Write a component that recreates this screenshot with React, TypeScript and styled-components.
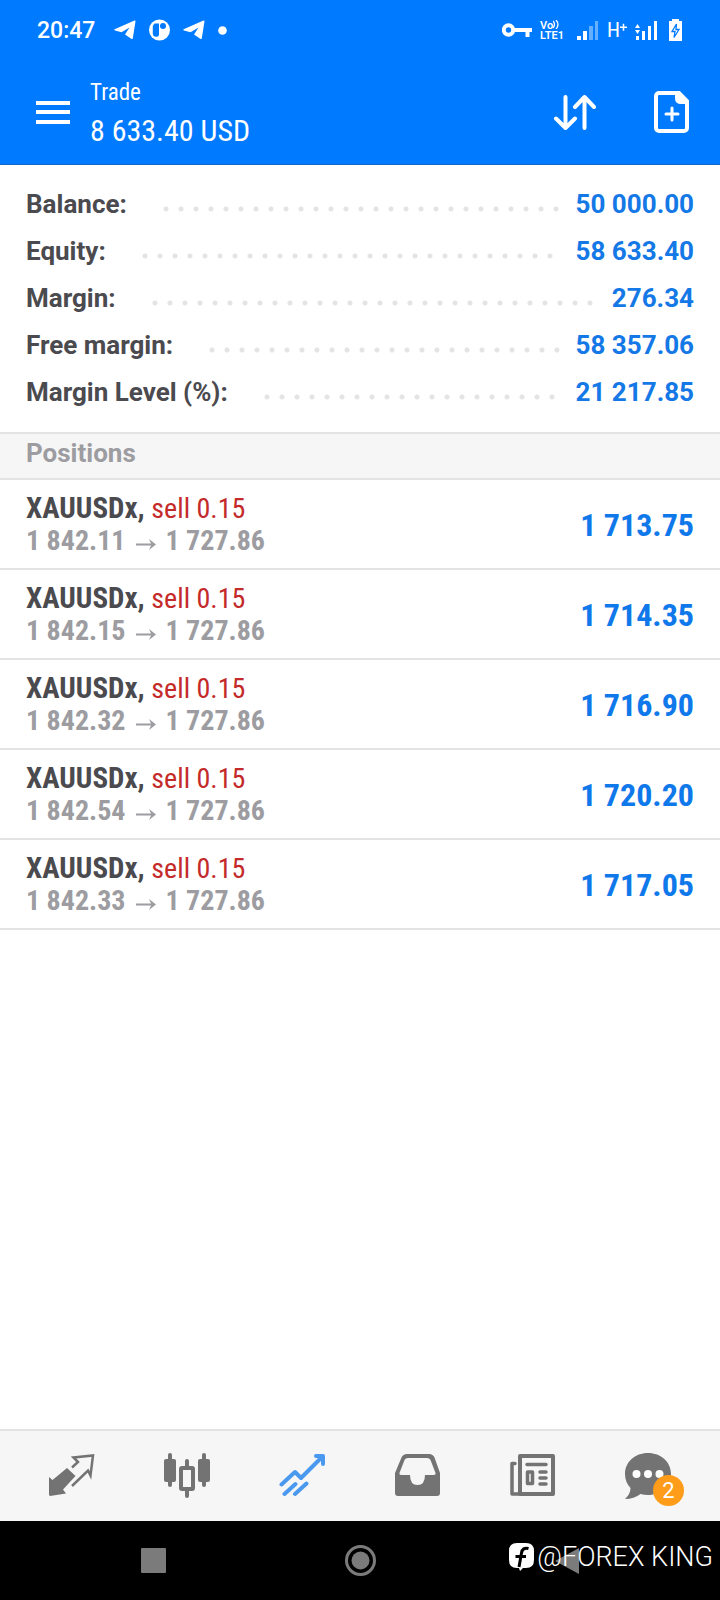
import React from "react";
import styled, { createGlobalStyle } from "styled-components";

const condensed = `"Roboto Condensed", "Liberation Sans Narrow", Roboto, sans-serif`;

const GlobalStyle = createGlobalStyle`
  * { box-sizing: border-box; }
  html, body, #root { height: 100%; }
  body {
    margin: 0;
    background: #fff;
    font-family: Roboto, sans-serif;
  }
`;

const Screen = styled.div`
  display: flex;
  flex-direction: column;
  min-height: 100%;
  background: #fff;
`;

const StatusBar = styled.div`
  display: flex;
  align-items: center;
  justify-content: space-between;
  height: 60px;
  padding: 0 37px;
  background: #007aff;
  color: #fff;
`;

const StatusGroup = styled.div<{ $gap: number }>`
  display: flex;
  align-items: center;
  gap: ${(p) => p.$gap}px;
`;

const Clock = styled.span`
  padding-top: 2px;
  font-size: 23px;
  line-height: 28px;
  font-weight: 500;
  margin-right: 6px;
`;

const VoLte = styled.span`
  display: flex;
  flex-direction: column;
  width: 29px;
  font-size: 11px;
  line-height: 10px;
  font-weight: 600;
  white-space: nowrap;
`;

const Network = styled.span`
  display: flex;
  align-items: center;
  width: 20px;
  font-family: ${condensed};
  font-size: 21px;
  line-height: 24px;
`;

const Header = styled.header`
  display: flex;
  align-items: center;
  height: 105px;
  padding: 0 30px 0 35px;
  background: #007aff;
  border-bottom: 1px solid #1266c4;
  color: #fff;
`;

const IconButton = styled.button`
  display: flex;
  padding: 0;
  border: 0;
  background: none;
  color: inherit;
  cursor: pointer;
`;

const Titles = styled.div`
  flex: 1;
  margin-left: 20px;
  padding-top: 2px;
  font-family: ${condensed};
`;

const Title = styled.h1`
  margin: 0;
  font-size: 23px;
  line-height: 36px;
  font-weight: 400;
`;

const Profit = styled.div`
  font-size: 30px;
  line-height: 40px;
`;

const Actions = styled.div`
  display: flex;
  align-items: center;
  gap: 58px;
`;

const Summary = styled.dl`
  margin: 0;
  padding: 15px 26px 17px;
`;

const SummaryRow = styled.div`
  display: flex;
  align-items: center;
  height: 47px;
  font-size: 26px;
  line-height: 30px;
  font-weight: 700;
`;

const Label = styled.dt`
  color: #4a4a4f;
`;

const Leader = styled.span`
  flex: 1;
  height: 6px;
  margin: 10px 14px 0 36px;
  background: radial-gradient(circle at 3px 3px, #e4e4e6 2px, transparent 3px) 0 0 / 15px 6px repeat-x;
`;

const Amount = styled.dd`
  margin: 0;
  color: #1478e6;
`;

const SectionTitle = styled.h2`
  height: 48px;
  margin: 0;
  padding: 4px 26px;
  border-top: 2px solid #e3e3e3;
  border-bottom: 2px solid #e3e3e3;
  background: #f6f6f6;
  color: #9c9ca1;
  font-size: 26px;
  line-height: 30px;
  font-weight: 700;
`;

const Positions = styled.ul`
  flex: 1;
  margin: 0;
  padding: 0;
  list-style: none;
`;

const Position = styled.li`
  display: flex;
  align-items: center;
  justify-content: space-between;
  height: 90px;
  padding: 1px 26px 0;
  border-bottom: 2px solid #e3e3e3;
  font-family: ${condensed};
  line-height: 32px;
  font-weight: 700;
`;

const Symbol = styled.div`
  color: #4a4a4f;
  font-size: 29px;
`;

const Side = styled.span`
  color: #c42a2a;
  font-size: 28px;
  font-weight: 400;
`;

const Prices = styled.div`
  color: #9c9ca1;
  font-size: 28px;
`;

const Arrow = styled.svg`
  margin: 0 10px;
  vertical-align: baseline;
`;

const Result = styled.div`
  color: #0f78ea;
  font-size: 32px;
  line-height: 40px;
`;

const TabBar = styled.nav`
  display: flex;
  justify-content: space-between;
  height: 92px;
  padding: 0 42px;
  border-top: 2px solid #e3e3e3;
  background: #f6f6f6;
`;

const Tab = styled.button<{ $active?: boolean }>`
  position: relative;
  display: flex;
  align-items: center;
  justify-content: center;
  width: 60px;
  padding: 0;
  border: 0;
  background: none;
  color: ${(p) => (p.$active ? "#4a99ee" : "#737373")};
  font-family: inherit;
  cursor: pointer;
`;

const Badge = styled.span`
  position: absolute;
  right: -6px;
  bottom: 15px;
  width: 31px;
  height: 31px;
  border-radius: 50%;
  background: #ff9c1a;
  color: #fff;
  font-size: 22px;
  line-height: 32px;
  text-align: center;
`;

const SystemNav = styled.div`
  position: relative;
  display: flex;
  align-items: center;
  justify-content: space-around;
  height: 79px;
  padding: 0 52px;
  background: #000;
  color: #7b7b7b;
`;

const Watermark = styled.div`
  position: absolute;
  right: 7px;
  top: 19px;
  display: flex;
  align-items: center;
  gap: 3px;
  color: #fff;
  font-size: 27px;
  line-height: 34px;
  font-weight: 300;
`;

const Plane = () => (
  <svg width="22" height="20" viewBox="0 0 22 20" fill="currentColor">
    <path d="M0.6 9.200 20.500.5c.6-.3 1.100 0 1 .8L18.800 18.200c-.2.900-.9 1.100-1.600.6L11 14.400 15.500 7.500 7.500 12.300 1 10.500C.2 10.200.1 9.500.6 9.200Z" />
  </svg>
);

const summary = [
  ["Balance:", "50 000.00"],
  ["Equity:", "58 633.40"],
  ["Margin:", "276.34"],
  ["Free margin:", "58 357.06"],
  ["Margin Level (%):", "21 217.85"],
];

const positions = [
  ["1 842.11", "1 713.75"],
  ["1 842.15", "1 714.35"],
  ["1 842.32", "1 716.90"],
  ["1 842.54", "1 720.20"],
  ["1 842.33", "1 717.05"],
];

export default function App() {
  return (
    <Screen>
      <GlobalStyle />
      <StatusBar>
        <StatusGroup $gap={13}>
          <Clock>20:47</Clock>
          <Plane />
          <svg width="21" height="22" viewBox="0 0 21 22">
            <circle cx="10.500" cy="11" r="10.500" fill="#fff" />
            <path d="M5.500 4.500h4.500v11a2.300 2.300 0 0 1-2.300 2.300H6.500A3 3 0 0 1 3.800 15V7Z" fill="#007aff" />
            <circle cx="14" cy="7" r="3" fill="#007aff" />
          </svg>
          <Plane />
          <svg width="9" height="9" viewBox="0 0 9 9">
            <circle cx="4.500" cy="4.500" r="4.300" fill="#fff" />
          </svg>
        </StatusGroup>
        <StatusGroup $gap={8}>
          <svg width="30" height="16" viewBox="0 0 30 16" fill="none" stroke="#fff" strokeWidth="4">
            <circle cx="6.500" cy="8" r="4.700" />
            <path d="M12 8h18M25.500 9v6" />
          </svg>
          <VoLte>
            <span>
              Vo
              <svg width="6" height="9" viewBox="0 0 6 9" fill="none" stroke="#fff" strokeWidth="1.300">
                <path d="M0 1q3 3.500 0 7M3 0q4 4.500 0 9" />
              </svg>
            </span>
            <span>LTE1</span>
          </VoLte>
          <svg width="22" height="20" viewBox="0 0 22 20" fill="#fff">
            <path d="M0 16h4v4H0zM6 11h4v9H6z" />
            <path d="M12 6h4v14h-4zM18 1h3v19h-3z" opacity=".4" />
          </svg>
          <Network>
            H
            <svg width="9" height="18" viewBox="0 0 9 18" fill="none" stroke="#fff" strokeWidth="2">
              <path d="M0 5.500h9M4.500 1v9" />
            </svg>
          </Network>
          <svg width="22" height="20" viewBox="0 0 22 20" fill="#fff">
            <path d="M1 16h3v4H1zM7 11h3v9H7zM13 6h3v14h-3zM19 1h3v19h-3zM0 8l2.500-4L5 8zM0 10l2.500 4L5 10z" />
          </svg>
          <svg width="18" height="24" viewBox="0 0 18 24">
            <path d="M4 3h3V1h7v2h3v20H4z" fill="#fff" />
            <path d="M11.500 6 7 13.500h3L9 19.500 14 11.500h-3Z" fill="#fff" stroke="#007aff" strokeWidth="1.300" />
          </svg>
        </StatusGroup>
      </StatusBar>

      <Header>
        <IconButton aria-label="Menu">
          <svg width="35" height="24" viewBox="0 0 35 24" fill="currentColor">
            <path d="M1 1h34v4H1zM1 10h34v4H1zM1 20h34v4H1z" />
          </svg>
        </IconButton>
        <Titles>
          <Title>Trade</Title>
          <Profit>8 633.40 USD</Profit>
        </Titles>
        <Actions>
          <IconButton aria-label="Sort">
            <svg width="43" height="36" viewBox="0 0 43 36" fill="none" stroke="currentColor" strokeWidth="4" strokeLinecap="round" strokeLinejoin="round">
              <path d="M12.500 3v31M3 24.500 12.500 34l9.500-9.500M31.500 34V3M22 13 31.500 3l9.500 10" />
            </svg>
          </IconButton>
          <IconButton aria-label="New order">
            <svg width="36" height="42" viewBox="0 0 36 42" fill="none" stroke="currentColor" strokeWidth="4">
              <path d="M5 2H25L33 10V37a3 3 0 0 1-3 3H5a3 3 0 0 1-3-3V5a3 3 0 0 1 3-3Z" />
              <path d="M21 3v4q0 6 6 6h6V10L25 3Z" fill="currentColor" stroke="none" />
              <path d="M18 17v12M12 23h12" strokeWidth="3" strokeLinecap="round" />
            </svg>
          </IconButton>
        </Actions>
      </Header>

      <Summary>
        {summary.map(([label, value]) => (
          <SummaryRow key={label}>
            <Label>{label}</Label>
            <Leader />
            <Amount>{value}</Amount>
          </SummaryRow>
        ))}
      </Summary>

      <SectionTitle>Positions</SectionTitle>
      <Positions>
        {positions.map(([open, result]) => (
          <Position key={open}>
            <div>
              <Symbol>
                XAUUSDx, <Side>sell 0.15</Side>
              </Symbol>
              <Prices>
                {open}
                <Arrow width="20" height="11" viewBox="0 0 20 11" fill="currentColor">
                  <path d="M0 4.500h15L13 0l7 5.500L13 11l2-4.500H0Z" />
                </Arrow>
                1 727.86
              </Prices>
            </div>
            <Result>{result}</Result>
          </Position>
        ))}
      </Positions>

      <TabBar>
        <Tab aria-label="Quotes">
          <svg width="46" height="44" viewBox="0 0 46 44" fill="none" stroke="currentColor" strokeWidth="2.500">
            <path d="M18 14 26.500 22 14 35.500 17 39.500 1 42 0 41V23l3.500 3Z" fill="currentColor" stroke="none" />
            <path d="M23 13.500 29 8 24.500 3.500 44 1.500 41.500 21.500 39 16.500 23 32" />
          </svg>
        </Tab>
        <Tab aria-label="Chart">
          <svg width="46" height="46" viewBox="0 0 46 46" fill="currentColor">
            <rect x="0" y="6" width="12" height="23" rx="2" />
            <rect x="4" y="0" width="4" height="34" rx="2" />
            <rect x="34" y="6" width="12" height="23" rx="2" />
            <rect x="38" y="0" width="4" height="34" rx="2" />
            <path d="M21 13V8q0-2 2-2t2 2v5ZM21 37v6q0 2 2 2t2-2v-6Z" />
            <rect x="17" y="15" width="12" height="21" rx="1" fill="none" stroke="currentColor" strokeWidth="4" />
          </svg>
        </Tab>
        <Tab aria-label="Trade" $active>
          <svg width="46" height="44" viewBox="0 0 46 44" fill="none" stroke="currentColor" strokeWidth="4" strokeLinecap="round" strokeLinejoin="round">
            <path d="M2.500 30.500 16 18l6 6L43 3M37 2h7v8M5.500 40 16.500 30M16 40l11.500-10.500" />
          </svg>
        </Tab>
        <Tab aria-label="History">
          <svg width="46" height="44" viewBox="0 0 46 44" fill="currentColor" fillRule="evenodd">
            <path d="M12 0H34q4 0 5.500 3.500L45 19v20q0 3-3 3H3q-3 0-3-3V19L6.500 3.500Q8 0 12 0ZM13 4Q10.500 4 9.500 6L4.500 19q-.5 2 1.500 2h9q0 10 7.500 10T30 21h9q2 0 1.500-2L35.500 6Q34.500 4 32 4Z" />
          </svg>
        </Tab>
        <Tab aria-label="News">
          <svg width="46" height="44" viewBox="0 0 46 44" fill="none" stroke="currentColor" strokeWidth="4" strokeLinecap="round">
            <path d="M10 2H43V40H10Z" strokeLinejoin="round" />
            <path d="M5 9.500H2V40H9" strokeWidth="3.500" strokeLinejoin="round" />
            <path d="M17 10.500H36M30 18h6M30 24h6M30 30h6" strokeWidth="3.500" />
            <rect x="17.500" y="18" width="5" height="11.500" strokeWidth="3.500" strokeLinejoin="round" />
          </svg>
        </Tab>
        <Tab aria-label="Messages">
          <svg width="46" height="46" viewBox="0 0 46 46">
            <path d="M23 0C36 0 46 9 46 21S36 42 23 42q-4 0-7.500-1Q9 46 0 46 5.500 41 5.500 35 0 29 0 21C0 9 10 0 23 0Z" fill="currentColor" />
            <g fill="#fff">
              <circle cx="11.500" cy="21" r="4" />
              <circle cx="23" cy="21" r="4" />
              <circle cx="34.500" cy="21" r="4" />
            </g>
          </svg>
          <Badge>2</Badge>
        </Tab>
      </TabBar>

      <SystemNav>
        <svg width="25" height="25" viewBox="0 0 25 25">
          <rect width="25" height="25" rx="1" fill="currentColor" />
        </svg>
        <svg width="31" height="31" viewBox="0 0 31 31">
          <circle cx="15.500" cy="15.500" r="14" fill="none" stroke="currentColor" strokeWidth="3" />
          <circle cx="15.500" cy="15.500" r="9" fill="currentColor" />
        </svg>
        <svg width="24" height="26" viewBox="0 0 24 26">
          <path d="M0 13 24 0v26Z" fill="currentColor" />
        </svg>
        <Watermark>
          <svg width="25" height="28" viewBox="0 0 25 28">
            <path d="M8 0h9q8 0 8 8v9q0 8-8 8h-3l-3 3-1-3H8q-8 0-8-8V8Q0 0 8 0Z" fill="#fff" />
            <path d="M19.500 5.500Q13.500 4 12.500 10L10 24M6.500 13.500h10.500" fill="none" stroke="#000" strokeWidth="3" />
          </svg>
          @FOREX KING
        </Watermark>
      </SystemNav>
    </Screen>
  );
}
